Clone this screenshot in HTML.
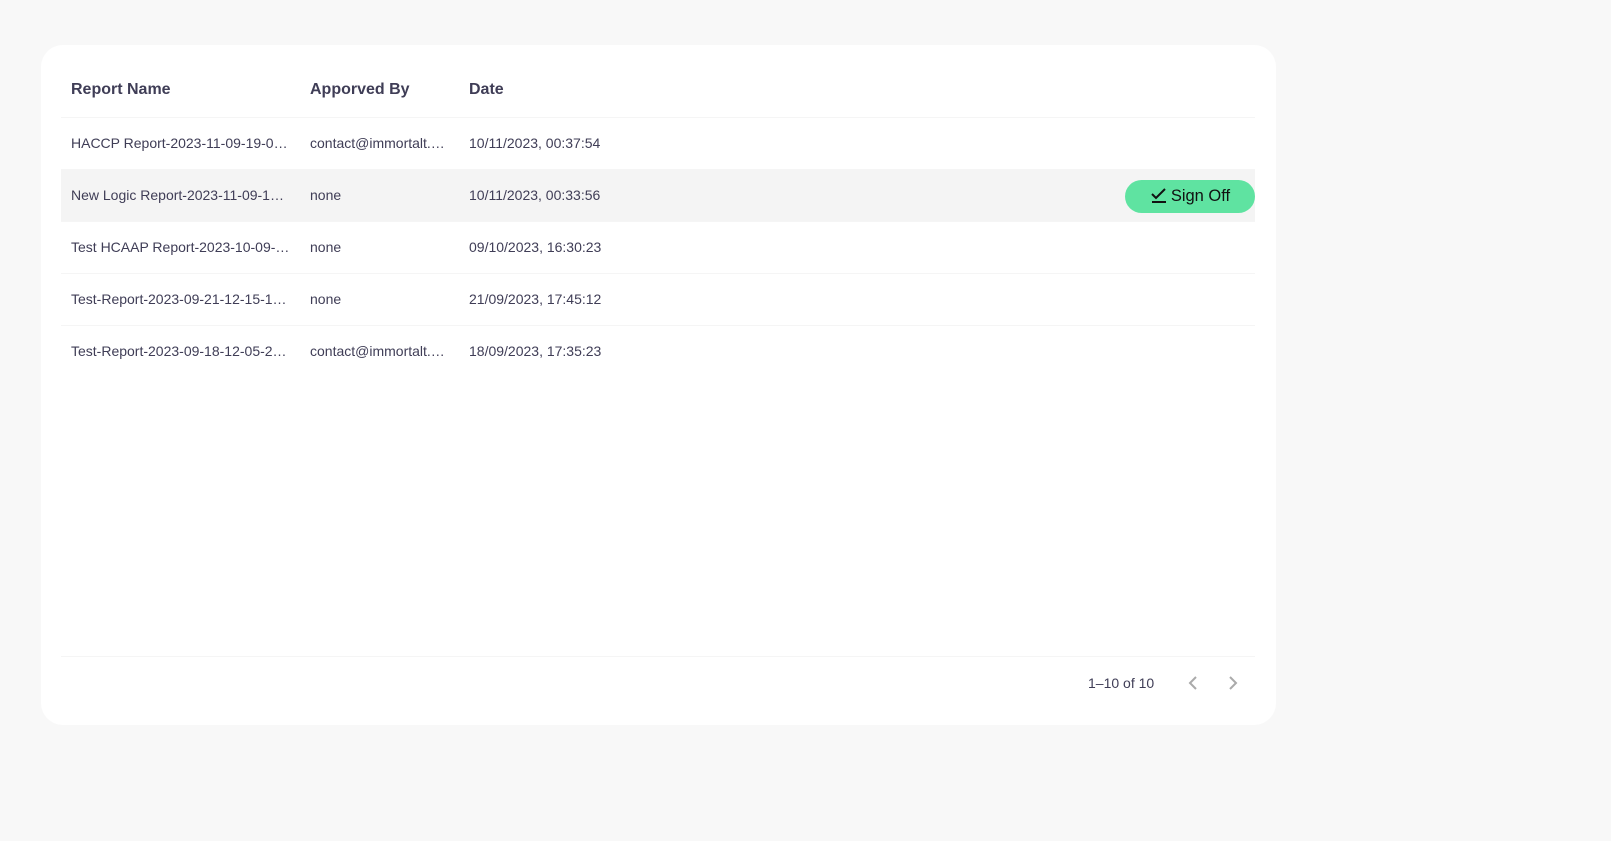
<!DOCTYPE html>
<html><head><style>
body{margin:0;background:#f8f8f8;width:1611px;height:841px;font-family:"Liberation Sans",sans-serif;color:#3f3d56;position:relative;overflow:hidden}
.card{position:absolute;left:41px;top:45px;width:1235px;height:680px;background:#fff;border-radius:22px}
.row{position:absolute;left:20px;width:1194px;height:51px;border-bottom:1px solid #f5f5f5;font-size:14px}
.row span{position:absolute;top:0;line-height:51px;white-space:nowrap}
.c1{left:10px}.c2{left:249px}.c3{left:408px}
.hdr{font-weight:bold;font-size:16px}
.hl{background:#f4f4f4}
.btn{position:absolute;left:1084px;top:135px;width:130px;height:33px;background:#5fe3a1;border-radius:17px;color:#111;font-size:16.5px;line-height:33px;text-align:center}
</style></head><body>
<div class="card">
<div class="row hdr" style="top:17px;height:55px"><span class="c1" style="line-height:56px">Report Name</span><span class="c2" style="line-height:56px">Apporved By</span><span class="c3" style="line-height:56px">Date</span></div>
<div class="row" style="top:73px"><span class="c1">HACCP Report-2023-11-09-19-0…</span><span class="c2">contact@immortalt.…</span><span class="c3">10/11/2023, 00:37:54</span></div>
<div class="row hl" style="top:125px"><span class="c1">New Logic Report-2023-11-09-1…</span><span class="c2">none</span><span class="c3">10/11/2023, 00:33:56</span></div>
<div class="row" style="top:177px"><span class="c1">Test HCAAP Report-2023-10-09-…</span><span class="c2">none</span><span class="c3">09/10/2023, 16:30:23</span></div>
<div class="row" style="top:229px"><span class="c1">Test-Report-2023-09-21-12-15-1…</span><span class="c2">none</span><span class="c3">21/09/2023, 17:45:12</span></div>
<div class="row" style="top:281px;border-bottom:none"><span class="c1">Test-Report-2023-09-18-12-05-2…</span><span class="c2">contact@immortalt.…</span><span class="c3">18/09/2023, 17:35:23</span></div>
<div class="btn"><svg width="18" height="18" viewBox="0 0 18 18" style="vertical-align:-3px;margin-right:3px"><path d="M2 8l4 4 9-9" stroke="#111" stroke-width="2" fill="none"/><path d="M2 16h14" stroke="#111" stroke-width="2"/></svg>Sign Off</div>
<div style="position:absolute;left:20px;top:611px;width:1194px;border-top:1px solid #f5f5f5"></div>
<div style="position:absolute;left:1047px;top:628px;font-size:14px;line-height:20px">1–10 of 10</div>
<svg style="position:absolute;left:1145px;top:629px" width="16" height="18" viewBox="0 0 16 18"><path d="M10 3l-6 6 6 6" stroke="#aaa" stroke-width="2" fill="none"/></svg>
<svg style="position:absolute;left:1183px;top:629px" width="16" height="18" viewBox="0 0 16 18"><path d="M6 3l6 6-6 6" stroke="#aaa" stroke-width="2" fill="none"/></svg>
</div>
</body></html>
